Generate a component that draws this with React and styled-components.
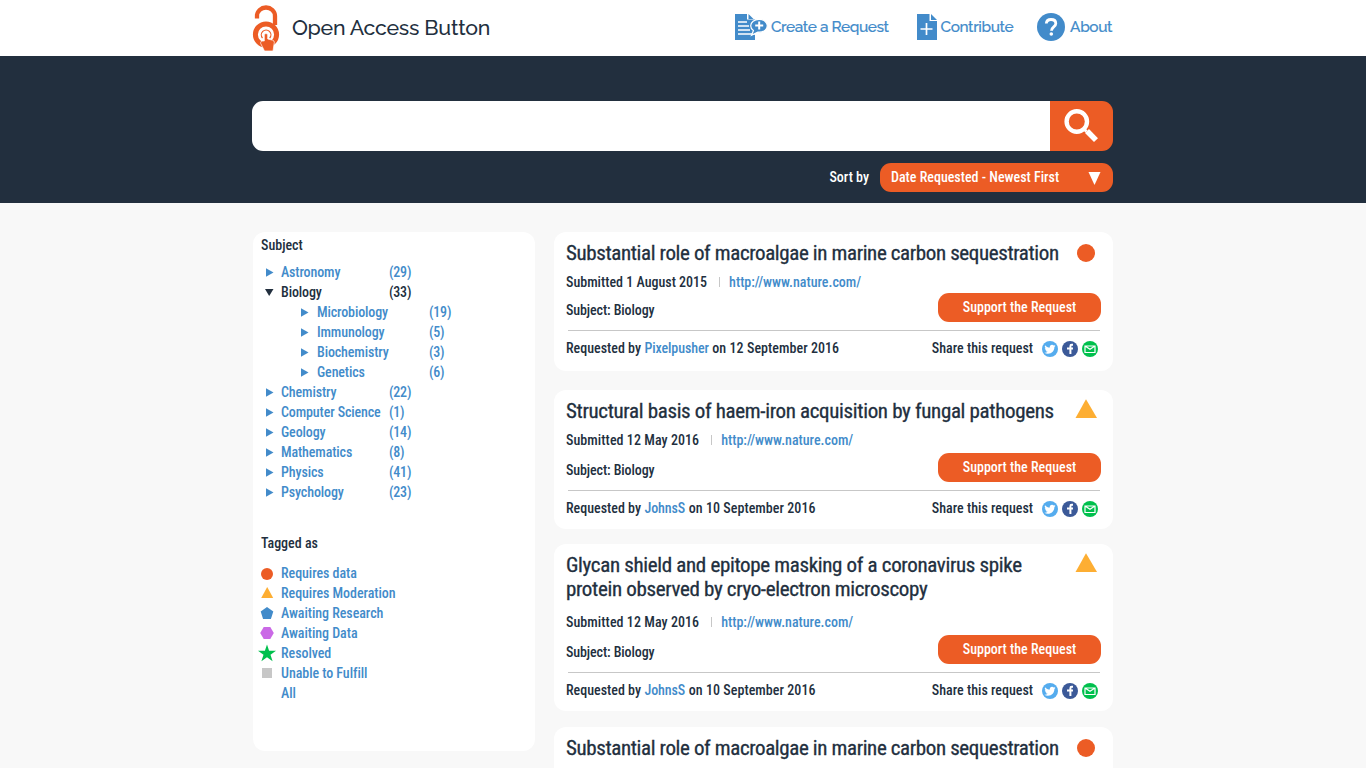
import React from "react";
import styled, { createGlobalStyle } from "styled-components";

const navy = "#222f3e";
const orange = "#ec5c25";
const blue = "#428bca";
const amber = "#fdae33";
const green = "#00c04d";

const GlobalStyle = createGlobalStyle`
  * { box-sizing: border-box; }
  body {
    margin: 0;
    background: #f8f8f8;
    color: ${navy};
    font: 500 14px/20px Roboto, "Liberation Sans", sans-serif;
    font-stretch: 75%;
  }
`;

const Page = styled.div`
  height: 768px;
  overflow: hidden;
`;

const Inner = styled.div`
  width: 861px;
  margin-left: 252px;
`;

const Header = styled.header`
  height: 56px;
  background: #fff;
`;

const HeaderRow = styled(Inner)`
  display: flex;
  align-items: center;
  height: 56px;
`;

const Brand = styled.a`
  display: flex;
  align-items: center;
  flex: none;
  gap: 11px;
  width: 483px;
  font: 500 21.3px/28px Raleway, Lato, sans-serif;
  letter-spacing: -0.24px;
  white-space: nowrap;
  svg { display: block; }
`;

const NavLink = styled.a`
  display: flex;
  align-items: center;
  flex: none;
  gap: ${(p) => p.$gap}px;
  margin-right: ${(p) => p.$after || 0}px;
  height: 54px;
  align-self: flex-start;
  color: ${blue};
  font: 500 15.4px/20px Raleway, Lato, sans-serif;
  letter-spacing: -0.4px;
  -webkit-text-stroke: 0.2px currentColor;
  white-space: nowrap;
  svg { display: block; flex: none; }
`;

const Hero = styled.section`
  height: 147px;
  padding-top: 45px;
  background: ${navy};
`;

const SearchBar = styled.div`
  display: flex;
  height: 50px;
  border-radius: 11px;
  overflow: hidden;
`;

const SearchInput = styled.input`
  flex: 1;
  min-width: 0;
  border: 0;
  padding: 0 14px;
  outline: 0;
  background: #fff;
`;

const SearchButton = styled.button`
  width: 63px;
  border: 0;
  padding: 0;
  background: ${orange};
  svg { display: block; }
`;

const SortRow = styled.div`
  display: flex;
  justify-content: flex-end;
  align-items: flex-start;
  gap: 11px;
  margin-top: 12px;
  line-height: 28px;
`;

const Text = styled.span`
  letter-spacing: ${(p) => p.$track ?? 0}px;
  color: ${(p) => p.$color || "inherit"};
  white-space: nowrap;
`;

const SortSelect = styled.button`
  display: flex;
  align-items: center;
  justify-content: space-between;
  width: 233px;
  height: 29px;
  padding: 0 12px 1px 11px;
  border: 0;
  border-radius: 11px;
  background: ${orange};
  color: #fff;
  font: inherit;
  svg { display: block; margin-top: 2px; }
`;

const Columns = styled(Inner)`
  display: flex;
  align-items: flex-start;
  gap: 19px;
  padding: 29px 0 0 1px;
`;

const Sidebar = styled.aside`
  width: 282px;
  height: 519px;
  padding: 3px 8px;
  border-radius: 12px;
  background: #fff;
`;

const SideHeading = styled.div`
  height: 20px;
  margin-bottom: ${(p) => p.$after}px;
`;

const SubjectRow = styled.div`
  display: grid;
  grid-template-columns: ${(p) => (p.$nested ? "16px 112px 40px" : "20px 108px 40px")};
  align-items: center;
  height: 20px;
  padding-left: ${(p) => (p.$nested ? 40 : 0)}px;
  color: ${(p) => (p.$open ? navy : blue)};
  svg { display: block; margin-left: ${(p) => (p.$nested ? 0 : p.$open ? 4 : 5)}px; }
`;

const TagRow = styled.div`
  display: grid;
  grid-template-columns: 20px auto;
  align-items: center;
  height: 20px;
  color: ${blue};
  svg { display: block; margin-left: -3px; }
`;

const TagList = styled.div`
  margin-top: 31px;
`;

const Results = styled.main`
  width: 559px;
`;

const Card = styled.article`
  height: ${(p) => p.$height}px;
  margin-bottom: ${(p) => p.$after}px;
  padding: 9px 12px 0;
  border-radius: 12px;
  background: #fff;
`;

const CardTop = styled.div`
  display: flex;
  justify-content: space-between;
  align-items: flex-start;
  svg { display: block; flex: none; margin-right: 4px; }
`;

const Title = styled.h2`
  margin: 0;
  font-size: 21px;
  line-height: 24px;
  font-weight: 400;
  letter-spacing: ${(p) => p.$track}px;
  -webkit-text-stroke: 0.3px currentColor;
  white-space: pre;
`;

const Meta = styled.div`
  display: flex;
  align-items: center;
  height: 20px;
  margin-top: ${(p) => p.$before}px;
`;

const Bar = styled.i`
  width: 1px;
  height: 10px;
  margin: 0 9px 0 12px;
  background: #c7c7c7;
`;

const Action = styled.div`
  display: flex;
  justify-content: space-between;
  height: 37px;
  margin-top: ${(p) => p.$before}px;
`;

const Subject = styled.div`
  padding-top: 7px;
`;

const SupportButton = styled.button`
  width: 163px;
  height: 29px;
  border: 0;
  padding: 0 0 1px;
  border-radius: 11px;
  background: ${orange};
  color: #fff;
  font: inherit;
`;

const Footer = styled.div`
  display: flex;
  justify-content: space-between;
  margin: 0 1px 0 2px;
  padding-top: 7px;
  border-top: 1px solid #c7c7c7;
`;

const Requester = styled.div`
  display: flex;
  gap: 3.500px;
  margin-left: -2px;
`;

const Share = styled.div`
  display: flex;
  gap: 4px;
  margin-right: 2px;
  svg { display: block; margin-top: 3px; }
  span { margin-right: 5px; }
`;

const Preview = styled.div`
  height: 41px;
  overflow: hidden;
`;

const Logo = () => (
  <svg width="29" height="48" viewBox="252 3 29 48">
    <path d="M257 17.500v-2.500a9 8.500 0 0 1 18 0v9" fill="none" stroke={orange} strokeWidth="4.300" />
    <circle cx="266" cy="33.500" r="10.600" fill="none" stroke={orange} strokeWidth="5" />
    <path d="M262.500 37a4.800 4.800 0 1 1 7.200 0" fill="none" stroke={orange} strokeWidth="1.200" />
    <path d="M264.300 33.500q1.700-2.200 3.400 0v4.500l5 1.200q1.800.5 1.600 2.300l-1.300 8.500h-8.500l-3.800-7.500q-.6-3 3.600-2.500z" fill={orange} stroke="#fff" strokeWidth=".7" />
  </svg>
);

const CreateIcon = () => (
  <svg width="33" height="28" viewBox="0 0 33 28">
    <path d="M0 1h12v5.500h8V27H0z" fill={blue} />
    <path d="M13.500 1l5 5h-5z" fill={blue} />
    <path d="M3 9h9M3 13h11M3 17h12M3 21h17" stroke="#fff" strokeWidth="1.500" />
    <path d="M24 6.300c4.700 0 8.300 2.800 8.300 6.500s-3.600 6.400-8.300 6.400l-1.200-.1-6.300 3.200 1.900-4.700c-1.700-1.200-2.700-2.900-2.700-4.800 0-3.700 3.600-6.500 8.300-6.500z" fill={blue} stroke="#fff" strokeWidth="1.200" />
    <path d="M24.200 8.500v8M20.200 12.500h8" stroke="#fff" strokeWidth="2" />
  </svg>
);

const ContributeIcon = () => (
  <svg width="20" height="28" viewBox="0 0 20 28">
    <path d="M0 1h12.500v7H20v19H0z" fill={blue} />
    <path d="M14 1l6 6h-6z" fill={blue} />
    <path d="M9.500 10v12M3.500 16h12" stroke="#fff" strokeWidth="1.700" />
  </svg>
);

const AboutIcon = () => (
  <svg width="28" height="28" viewBox="0 0 28 28">
    <circle cx="14" cy="14" r="14" fill={blue} />
    <path d="M9.300 10.500c.2-2.700 2-4 4.700-4 2.900 0 4.800 1.600 4.800 4 0 3.500-4.300 3.300-4.300 7.200" fill="none" stroke="#fff" strokeWidth="2.800" />
    <circle cx="14.300" cy="21" r="1.800" fill="#fff" />
  </svg>
);

const SearchIcon = () => (
  <svg width="63" height="50" viewBox="0 0 63 50">
    <circle cx="26.800" cy="20.500" r="10.200" fill="none" stroke="#fff" strokeWidth="4.400" />
    <path d="M33.500 27.500l3 3" stroke="#fff" strokeWidth="3" />
    <path d="M37 30l9 9.200" stroke="#fff" strokeWidth="5.500" />
  </svg>
);

const Arrow = ({ open }) => (
  <svg width="9" height="9" viewBox="0 0 9 9">
    <path d={open ? "M0 1h8.500L4.200 8z" : "M0 .2l7.500 4.300L0 8.800z"} fill="currentColor" />
  </svg>
);

const shapes = {
  data: <circle cx="9" cy="10" r="6" fill={orange} />,
  moderation: <path d="M9.200 3l6 11h-12z" fill={amber} />,
  research: <path d="M9 3l6.300 4.600-2.400 7.400H5.100L2.700 7.600z" fill={blue} />,
  awaiting: <path d="M5.700 3h6.600l3.500 6-3.500 6H5.700L2.200 9z" fill="#ca69e6" />,
  resolved: <path d="M9 .5l2.100 6.200H18l-5.500 4 2.100 6.500L9 13.300l-5.600 3.900 2.100-6.500L0 6.700h6.900z" fill={green} />,
  unable: <path d="M4 4h10v10H4z" fill="#c7c7c7" />,
};

const Marker = ({ kind }) => (
  <svg width="22" height="24" viewBox="0 0 22 24">
    {kind === "data" ? <circle cx="11" cy="12" r="9" fill={orange} /> : <path d="M11 .2L22 19H.5z" fill={amber} />}
  </svg>
);

const Twitter = () => (
  <svg width="16" height="16" viewBox="0 0 24 24">
    <circle cx="12" cy="12" r="12" fill="#55acee" />
    <path transform="translate(3.500 4) scale(.7)" fill="#fff" d="M23.950 4.570a10 10 0 0 1-2.820.770 4.960 4.960 0 0 0 2.160-2.720c-.950.550-2 .950-3.130 1.180a4.920 4.920 0 0 0-8.380 4.480C7.690 8.090 4.070 6.130 1.640 3.160a4.920 4.920 0 0 0 1.520 6.570 4.900 4.900 0 0 1-2.230-.610v.060a4.920 4.920 0 0 0 3.950 4.830 5 5 0 0 1-2.210.080 4.940 4.940 0 0 0 4.600 3.420A9.870 9.870 0 0 1 0 19.540a13.990 13.990 0 0 0 7.550 2.210c9.050 0 14-7.500 14-13.980l-.02-.64a9.900 9.900 0 0 0 2.420-2.560z" />
  </svg>
);

const Facebook = () => (
  <svg width="16" height="16" viewBox="0 0 16 16">
    <circle cx="8" cy="8" r="8" fill="#3b5998" />
    <path d="M11 3.800H9.700Q8.400 3.800 8.400 5.200V13M5 7.600h6" fill="none" stroke="#fff" strokeWidth="2" />
  </svg>
);

const Mail = () => (
  <svg width="16" height="16" viewBox="0 0 16 16">
    <circle cx="8" cy="8" r="8" fill={green} />
    <path d="M3 5h10v6.500H3zM3.800 5.500L8 8.200l4.200-2.700" fill="none" stroke="#fff" strokeWidth="1.200" />
  </svg>
);

const subjects = [
  ["Astronomy", 29],
  ["Biology", 33, "open"],
  ["Microbiology", 19, "nested"],
  ["Immunology", 5, "nested"],
  ["Biochemistry", 3, "nested"],
  ["Genetics", 6, "nested"],
  ["Chemistry", 22],
  ["Computer Science", 1],
  ["Geology", 14],
  ["Mathematics", 8],
  ["Physics", 41],
  ["Psychology", 23],
];

const tags = [
  ["Requires data", "data"],
  ["Requires Moderation", "moderation"],
  ["Awaiting Research", "research"],
  ["Awaiting Data", "awaiting"],
  ["Resolved", "resolved"],
  ["Unable to Fulfill", "unable"],
  ["All"],
];

const macroalgae = {
  title: "Substantial role of macroalgae in marine carbon sequestration",
  track: -0.38,
  date: "1 August 2015",
  by: "Pixelpusher",
  on: "12 September 2016",
  kind: "data",
};

const requests = [
  { ...macroalgae, height: 139, before: 1, after: 19 },
  {
    title: "Structural basis of haem-iron acquisition by fungal pathogens",
    track: -0.34,
    date: "12 May 2016", by: "JohnsS", on: "10 September 2016",
    kind: "moderation", height: 139, before: 3, after: 15,
  },
  {
    title: "Glycan shield and epitope masking of a coronavirus spike\nprotein observed by cryo-electron microscopy",
    track: -0.34,
    date: "12 May 2016", by: "JohnsS", on: "10 September 2016",
    kind: "moderation", height: 167, before: 3, after: 16,
  },
];

const CardHeading = ({ r }) => (
  <CardTop>
    <Title $track={r.track}>{r.title}</Title>
    <Marker kind={r.kind} />
  </CardTop>
);

const Request = ({ r }) => (
  <Card $height={r.height} $after={r.after}>
    <CardHeading r={r} />
    <Meta $before={r.title.includes("\n") ? 11 : 7}>
      <Text $track={r.kind === "data" ? 0 : 0.06}>Submitted {r.date}</Text>
      <Bar />
      <Text $color={blue}>http://www.nature.com/</Text>
    </Meta>
    <Action $before={r.before}>
      <Subject><Text $track={-0.1}>Subject: Biology</Text></Subject>
      <SupportButton><Text>Support the Request</Text></SupportButton>
    </Action>
    <Footer>
      <Requester>
        <Text>Requested by</Text>
        <Text $color={blue} $track={-0.1}>{r.by}</Text>
        <Text $track={0.05}>on {r.on}</Text>
      </Requester>
      <Share>
        <Text>Share this request</Text>
        <Twitter />
        <Facebook />
        <Mail />
      </Share>
    </Footer>
  </Card>
);

export default function App() {
  return (
    <Page>
      <GlobalStyle />
      <Header>
        <HeaderRow>
          <Brand><Logo />Open Access Button</Brand>
          <NavLink $gap={3} $after={28}><CreateIcon />Create a Request</NavLink>
          <NavLink $gap={4} $after={24}><ContributeIcon />Contribute</NavLink>
          <NavLink $gap={5}><AboutIcon />About</NavLink>
        </HeaderRow>
      </Header>
      <Hero>
        <Inner>
          <SearchBar>
            <SearchInput aria-label="Search" />
            <SearchButton aria-label="Search"><SearchIcon /></SearchButton>
          </SearchBar>
          <SortRow>
            <Text $color="#fff">Sort by</Text>
            <SortSelect>
              <Text>Date Requested - Newest First</Text>
              <svg width="13" height="15" viewBox="0 0 13 15"><path d="M.5 1h12l-6 13z" fill="#fff" /></svg>
            </SortSelect>
          </SortRow>
        </Inner>
      </Hero>
      <Columns>
        <Sidebar>
          <SideHeading $after={7}><Text>Subject</Text></SideHeading>
          {subjects.map(([name, count, state]) => (
            <SubjectRow key={name} $nested={state === "nested"} $open={state === "open"}>
              <Arrow open={state === "open"} />
              <Text $track={-0.12}>{name}</Text>
              <Text $track={-0.2}>({count})</Text>
            </SubjectRow>
          ))}
          <TagList>
            <SideHeading $after={10}><Text>Tagged as</Text></SideHeading>
            {tags.map(([name, kind]) => (
              <TagRow key={name}>
                {kind ? <svg width="18" height="18" viewBox="0 0 18 18">{shapes[kind]}</svg> : <i />}
                <Text $track={-0.05}>{name}</Text>
              </TagRow>
            ))}
          </TagList>
        </Sidebar>
        <Results>
          {requests.map((r) => <Request key={r.title} r={r} />)}
          <Preview>
            <Card $height={60} $after={0}><CardHeading r={macroalgae} /></Card>
          </Preview>
        </Results>
      </Columns>
    </Page>
  );
}
